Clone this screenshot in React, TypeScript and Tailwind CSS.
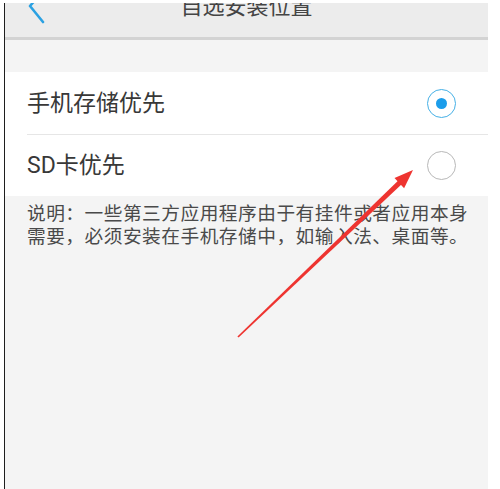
import { FC } from "react";

const Radio: FC<{ checked?: boolean }> = ({ checked }) => (
  <div
    className={
      checked
        ? "flex h-[29px] w-[29px] items-center justify-center rounded-full border-[1.5px] border-[#45b0e6]"
        : "flex h-[29px] w-[29px] items-center justify-center rounded-full border-[1.5px] border-[#b8b8b8]"
    }
  >
    {checked && <div className="h-[11px] w-[11px] rounded-full bg-[#1c9dea]" />}
  </div>
);

const App: FC = () => {
  const options = [
    { id: 1, name: "手机存储优先", checked: true },
    { id: 2, name: "SD卡优先", checked: false },
  ];

  return (
    <div className="relative flex h-[489px] w-[500px] overflow-hidden bg-white pl-[4px] pt-[3px] font-['Roboto','Noto_Sans_CJK_SC',sans-serif]">
      <div className="flex w-[484px] flex-col border-l-[1.5px] border-[#1e1e1e] bg-[#f4f4f4]">
        {/* header */}
        <div className="flex h-[37px] shrink-0 overflow-hidden border-b-[3px] border-[#d3d3d3] bg-[#ececec]">
          <svg className="ml-[22px] h-[34px] w-[20px] shrink-0" viewBox="0 0 20 34" fill="none">
            <polyline
              points="16,-12 3,3 16,19"
              stroke="#2ba1e2"
              strokeWidth="2.6"
              strokeLinecap="round"
              strokeLinejoin="round"
            />
          </svg>
          <div className="mt-[-7px] flex-1 text-center text-[22px] leading-[22px] text-[#444]">
            自选安装位置
          </div>
          <div className="mr-[22px] w-[20px] shrink-0" />
        </div>

        <div className="h-[32px] shrink-0" />

        {/* options */}
        <div className="bg-white pl-[22px]">
          {options.map((o, i) => (
            <div
              key={o.id}
              className={
                i === 0
                  ? "flex h-[63px] items-center justify-between border-b border-[#e6e6e6] pr-[32px]"
                  : "flex h-[61px] items-center justify-between pr-[32px]"
              }
            >
              <span className="text-[23px] leading-none text-[#383838]">{o.name}</span>
              <Radio checked={o.checked} />
            </div>
          ))}
        </div>

        {/* note */}
        <div className="pl-[22px] pt-[7px] text-[18.7px] leading-[23px] tracking-[0.5px] text-[#4a4a4a]">
          说明：一些第三方应用程序由于有挂件或者应用本身
          <br />
          需要，必须安装在手机存储中，如输入法、桌面等。
        </div>
      </div>

      {/* annotation arrow */}
      <svg className="pointer-events-none absolute left-0 top-0 h-[489px] w-[500px]" viewBox="0 0 500 489">
        <polygon points="238.6,337.6 237.4,336.4 398.3,180.6 401.7,184.2" fill="#ee3430" />
        <polygon points="413,170 404.1,188.2 394.5,178" fill="#ee3430" />
      </svg>
    </div>
  );
};

export default App;
